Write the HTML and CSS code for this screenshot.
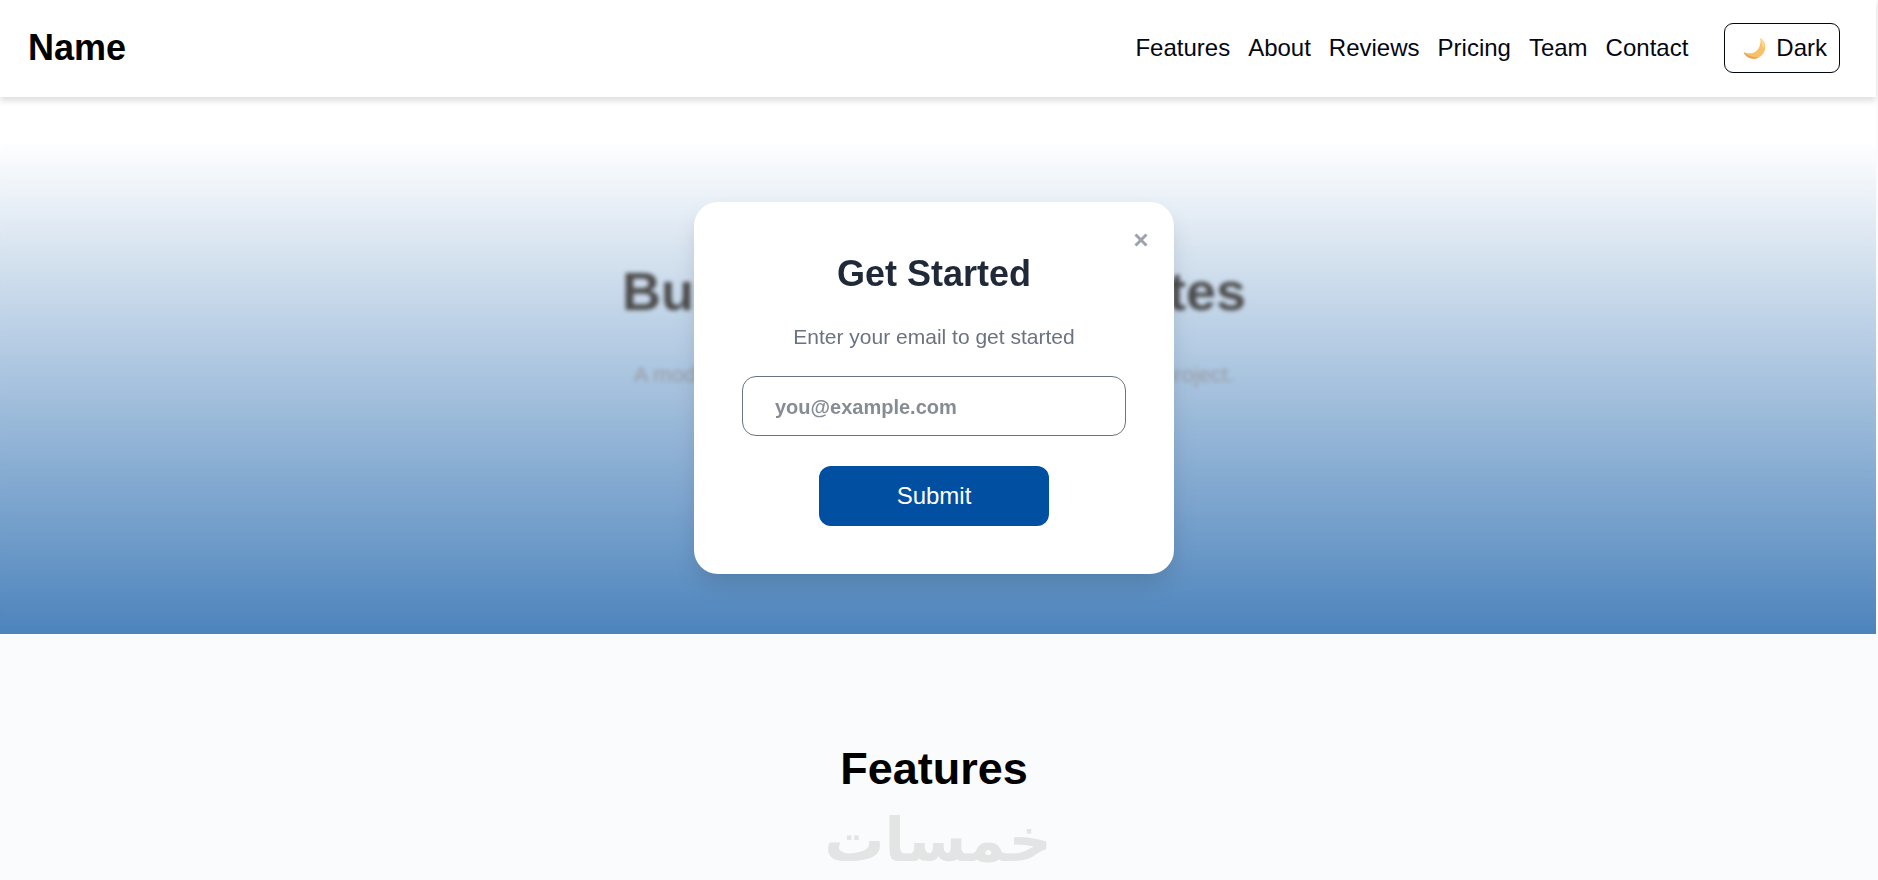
FILE: index.html
```html
<!DOCTYPE html>
<html lang="en">
<head>
<meta charset="utf-8">
<title>Name</title>
<link rel="stylesheet" href="styles.css">
</head>
<body>
<header class="header">
  <a class="brand" href="#">Name</a>
  <nav class="nav">
    <a href="#features">Features</a>
    <a href="#about">About</a>
    <a href="#reviews">Reviews</a>
    <a href="#pricing">Pricing</a>
    <a href="#team">Team</a>
    <a href="#contact">Contact</a>
  </nav>
  <button class="theme" type="button">
    <svg class="moon" viewBox="0 0 24 24" aria-hidden="true">
      <path d="M18 1C22 3.500 24 8 23 13C21 20.500 13.500 24.500 7 22C3.800 20.700 1.500 18.500 .7 16C6 17.500 11 17.500 14.500 14C18 10.500 18.800 6 18 1Z" fill="#f9c06a"/>
      <path d="M.7 16C1.500 18.500 3.800 20.700 7 22C10 23.200 13.600 22.900 16.500 21.200C11 21.500 5 20 .7 16Z" fill="#e9a24e"/>
      <path d="M18 1C21.500 3.500 23 8 21.500 12C19.500 9 19.500 5 18 1Z" fill="#fbdc92"/>
    </svg>
    Dark
  </button>
</header>
<main>
  <section class="hero">
    <h1 class="hero-title">Build Amazing Websites</h1>
    <p class="hero-text">A modern landing page template to start your next big project.</p>
    <div class="overlay">
      <form class="modal" role="dialog" aria-labelledby="modal-title">
        <button class="close" type="button" aria-label="Close">
          <svg viewBox="0 0 14 14" aria-hidden="true"><path d="M1.500 1.500L12.500 12.500M12.500 1.500L1.500 12.500"/></svg>
        </button>
        <h2 class="modal-title" id="modal-title">Get Started</h2>
        <label class="modal-text" for="email">Enter your email to get started</label>
        <input class="email" id="email" type="email" placeholder="you@example.com">
        <button class="submit" type="submit">Submit</button>
      </form>
    </div>
  </section>
  <section class="features" id="features">
    <h2 class="features-title">Features</h2>
    <p class="mark" lang="ar" dir="rtl">خمسات</p>
  </section>
</main>
</body>
</html>
```
FILE: styles.css
```css
* {
  box-sizing: border-box;
}

body {
  margin: 0;
  padding-right: 2px;
  background: #fafbfd;
  color: #000;
  font-family: "Liberation Sans", Arial, sans-serif;
  font-size: 24px;
  overflow-x: hidden;
}

h1, h2, p {
  margin: 0;
}

button, input {
  font-family: inherit;
}

main {
  padding-top: 45px;
  background: #fff;
}

.header {
  position: relative;
  z-index: 1;
  display: flex;
  align-items: center;
  padding: 23px 36px 24px 28px;
  background: #fff;
  box-shadow: 0 4px 6px rgba(0, 0, 0, .13);
}

.brand {
  margin-right: auto;
  color: #000;
  font-size: 36px;
  font-weight: 700;
  line-height: 48px;
  text-decoration: none;
}

.nav {
  display: flex;
  gap: 18px;
  margin-right: 36px;
}

.nav a {
  color: #030712;
  text-decoration: none;
}

.theme {
  display: flex;
  align-items: center;
  gap: 10px;
  height: 50px;
  padding: 0 12px 0 18px;
  border: 1px solid #030712;
  border-radius: 9px;
  background: #fff;
  color: #030712;
  font-size: 24px;
}

.moon {
  width: 23px;
  height: 23px;
}

.hero {
  position: relative;
  padding: 117px 8px 243px 0;
  background: linear-gradient(#fff, #004fa0);
  text-align: center;
}

.hero-title {
  font-size: 54px;
  line-height: 64px;
}

.hero-text {
  margin-top: 36px;
  color: #6b7280;
  font-size: 22px;
  line-height: 32px;
}

.overlay {
  position: absolute;
  inset: 0;
  display: flex;
  align-items: center;
  justify-content: center;
  padding-right: 8px;
  background: rgba(255, 255, 255, .3);
  backdrop-filter: blur(2px);
}

.modal {
  position: relative;
  display: flex;
  flex-direction: column;
  align-items: center;
  width: 480px;
  padding: 48px;
  border-radius: 24px;
  background: #fff;
  box-shadow: 0 12px 24px -4px rgba(0, 0, 0, .15);
}

.close {
  position: absolute;
  top: 27px;
  right: 22px;
  display: grid;
  place-items: center;
  width: 22px;
  height: 22px;
  padding: 0;
  border: 0;
  background: none;
}

.close svg {
  width: 14px;
  height: 14px;
  stroke: #9ca3af;
  stroke-width: 3;
}

.modal-title {
  color: #1f2937;
  font-size: 36px;
  line-height: 48px;
}

.modal-text {
  margin: 24px 0;
  color: #6b7280;
  font-size: 21px;
  line-height: 30px;
}

.email {
  width: 100%;
  height: 60px;
  padding: 2px 32px 0;
  border: 1px solid #6b7280;
  border-radius: 14px;
  background: #fff;
  font-size: 20px;
  font-weight: 700;
}

.email::placeholder {
  color: #868c94;
}

.submit {
  width: 60%;
  height: 60px;
  margin-top: 30px;
  border: 0;
  border-radius: 12px;
  background: #004fa0;
  color: #fff;
  font-size: 24px;
}

.features {
  display: flex;
  flex-direction: column;
  align-items: center;
  padding: 108px 0 0;
  background: #fafbfd;
}

.features-title {
  padding-right: 8px;
  font-size: 45px;
  line-height: 54px;
}

.mark {
  color: #e3e5e5;
  font-family: "DejaVu Sans", sans-serif;
  font-size: 60px;
  font-weight: 700;
  line-height: 88px;
}
```
